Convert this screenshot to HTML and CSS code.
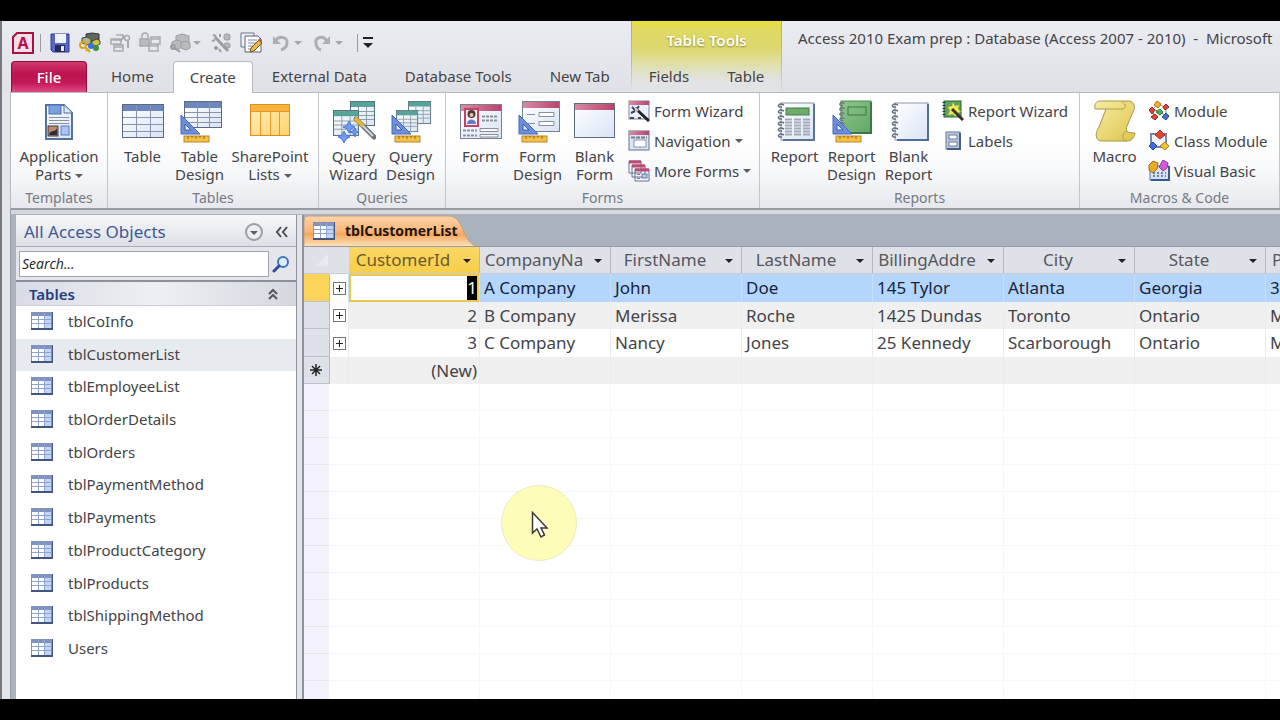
FILE: index.html
```html
<!DOCTYPE html>
<html lang="en">
<head>
    <meta charset="UTF-8">
    <meta name="viewport" content="width=device-width, initial-scale=1.0">
    <title>Access 2010 Exam prep</title>
    <link rel="stylesheet" href="styles.css">
</head>
<body>
    <!-- Shared icon parts -->
    <svg class="defs" width="0" height="0" aria-hidden="true">
        <defs>
            <linearGradient id="gPage" x1="0" y1="0" x2="1" y2="1">
                <stop offset="0" stop-color="#ffffff"/>
                <stop offset="1" stop-color="#d9e4f7"/>
            </linearGradient>
            <linearGradient id="gPink" x1="0" y1="0" x2="1" y2="0">
                <stop offset="0" stop-color="#d88aa4"/>
                <stop offset="1" stop-color="#b8456c"/>
            </linearGradient>
            <linearGradient id="gGreen" x1="0" y1="0" x2="1" y2="1">
                <stop offset="0" stop-color="#8fc48c"/>
                <stop offset="1" stop-color="#5fa865"/>
            </linearGradient>
            <linearGradient id="gScroll" x1="0" y1="0" x2="1" y2="1">
                <stop offset="0" stop-color="#f6eda4"/>
                <stop offset="1" stop-color="#dfc54c"/>
            </linearGradient>
            <linearGradient id="gOrange" x1="0" y1="0" x2="1" y2="1">
                <stop offset="0" stop-color="#fff0b8"/>
                <stop offset="1" stop-color="#fdd272"/>
            </linearGradient>
        </defs>
        <symbol id="designTools" viewBox="0 0 44 44">
            <path d="M3 15V34H22Z" fill="#6c8fdc" stroke="#4468b8"/>
            <path d="M7 24V30H13Z" fill="#e4ecfb" stroke="#3a5cab"/>
            <rect x="6" y="36" width="25" height="6" fill="#f5c044" stroke="#b8862a"/>
            <path d="M10 36v3M14 36v2M18 36v3M22 36v2M26 36v3" stroke="#8a6420"/>
        </symbol>
        <symbol id="tableSmall" viewBox="0 0 22 18">
            <rect x="0" y="0" width="22" height="18" fill="#42567f"/>
            <rect x="0" y="0" width="21" height="16" fill="#8093bf"/>
            <rect x="1" y="4" width="19" height="12" fill="#ffffff"/>
            <path d="M14 4h6v12h-6z" fill="#c3d5f6"/>
            <path d="M1 7.5h19M1 11.5h19M7.5 1v15M13.5 1v15" stroke="#8fa5d0"/>
        </symbol>
        <symbol id="queryTable" viewBox="0 0 26 26">
            <rect x="0.5" y="0.5" width="24" height="24" fill="url(#gPage)" stroke="#57717c"/>
            <rect x="1" y="1" width="23" height="5" fill="#55a39b"/>
            <path d="M1 10.5h23M1 14.5h23M1 18.5h23M8.5 6v18M16.5 6v18" stroke="#8da0a8"/>
        </symbol>
        <symbol id="binding" viewBox="0 0 10 38">
            <path d="M8 3c-6-3-8 3-2 2M8 9c-6-3-8 3-2 2M8 15c-6-3-8 3-2 2M8 21c-6-3-8 3-2 2M8 27c-6-3-8 3-2 2M8 33c-6-3-8 3-2 2" fill="none" stroke="#666c78" stroke-width="1.4"/>
        </symbol>
        <symbol id="cubes" viewBox="0 0 22 18">
            <path d="M7 2l6-2 7 2v6l-6 3-7-2z"/>
            <path d="M3 8l5-2 5 2v5l-5 3-5-2z"/>
            <path d="M12 9l5-2 4 2v5l-4 2-5-2z"/>
        </symbol>
    </svg>

    <div class="window">
        <header class="title-bar">
            <div class="title-left">
                <div class="quick-access">
                    <svg class="app-logo" viewBox="0 0 22 22" width="22" height="22">
                        <path d="M1 5L5 1H21V21H1Z" fill="#f8dde8" stroke="#a5123f" stroke-width="2"/>
                        <text x="11" y="17" text-anchor="middle">A</text>
                    </svg>
                    <span class="qa-sep"></span>
                    <button class="qa-btn" aria-label="Save">
                        <svg viewBox="0 0 22 22" width="22" height="22">
                            <path d="M2 2H20V20H4L2 18Z" fill="#5a65c4" stroke="#343c8e"/>
                            <rect x="6" y="2" width="11" height="9" fill="#eef2fd"/>
                            <rect x="6" y="13" width="10" height="7" fill="#242b60"/>
                            <rect x="12" y="14" width="3" height="5" fill="#e6eafc"/>
                        </svg>
                    </button>
                    <button class="qa-btn" aria-label="Database permissions">
                        <svg viewBox="0 0 22 22" width="22" height="22">
                            <path d="M7 2l6-1 7 1v6l-6 2-7-1z" fill="#5f6b5c" stroke="#333"/>
                            <path d="M3 6l5-1 4 2v4l-4 2-5-2z" fill="#a9b78a" stroke="#444"/>
                            <path d="M13 9l5-2 3 2v3l-4 2-4-1z" fill="#d3c23e" stroke="#444"/>
                            <circle cx="12" cy="14" r="3" fill="#3f6ee0"/>
                            <circle cx="17" cy="16" r="3" fill="#38943c"/>
                            <circle cx="4" cy="13" r="3" fill="none" stroke="#d9a41e" stroke-width="2"/>
                            <path d="M6 15l5 5M9 17l-2 2" stroke="#d9a41e" stroke-width="2"/>
                        </svg>
                    </button>
                    <button class="qa-btn" aria-label="Form key" disabled>
                        <svg viewBox="0 0 22 22" width="22" height="22" fill="none" stroke="#a9abae" stroke-width="1.500">
                            <path d="M2 7h10v5H2zM2 8h10M5 13h9v6H5zM5 15h9M7 3h7v3"/>
                            <circle cx="18" cy="6" r="2.500"/>
                            <path d="M19 9v7M16 4l-5 5" stroke-width="2"/>
                        </svg>
                    </button>
                    <button class="qa-btn" aria-label="Lock form" disabled>
                        <svg viewBox="0 0 22 22" width="22" height="22" fill="none" stroke="#a9abae" stroke-width="1.500">
                            <path d="M3 7V4a3 3 0 0 1 6 0V7"/>
                            <rect x="1" y="7" width="9" height="7" fill="#b9bbbe"/>
                            <path d="M12 5h9v7h-9zM12 7h9M10 12h9v7h-9zM10 14h9"/>
                        </svg>
                    </button>
                    <button class="qa-btn qa-split" aria-label="Users" disabled>
                        <svg viewBox="0 0 22 22" width="22" height="22" fill="#b9bbbe" stroke="#9b9da0">
                            <use href="#cubes"/>
                            <circle cx="4" cy="15" r="2" fill="none" stroke-width="2"/>
                            <path d="M6 16l5 4" stroke-width="2"/>
                        </svg>
                        <span class="caret caret-off"></span>
                    </button>
                    <button class="qa-btn" aria-label="Wizard" disabled>
                        <svg viewBox="0 0 22 22" width="22" height="22" fill="#b4b6b9" stroke="#9b9da0">
                            <rect x="14" y="2" width="6" height="6" rx="2"/>
                            <rect x="14" y="11" width="6" height="5" rx="2"/>
                            <path d="M5 5L18 19" stroke-width="3"/>
                            <path d="M3 3l3 1M10 2v3M2 9l3-1M4 16h4M6 14v4M9 17l2 3" stroke-width="2"/>
                        </svg>
                    </button>
                    <button class="qa-btn" aria-label="Edit form">
                        <svg viewBox="0 0 22 22" width="22" height="22">
                            <path d="M1 1h13v14H1z" fill="#eef1f7" stroke="#6b7488"/>
                            <path d="M5 4h13l3 3v13H5z" fill="#fafbfe" stroke="#59647d"/>
                            <path d="M8 8h9M8 11h9M8 14h7M8 17h5" stroke="#7d89a5"/>
                            <path d="M10 20l1-4 8-8 3 3-8 8z" fill="#e8b84a" stroke="#77531d"/>
                            <path d="M18 8l2-2 2 3-1 2z" fill="#b85c3a"/>
                        </svg>
                    </button>
                    <button class="qa-btn qa-split" aria-label="Undo" disabled>
                        <svg viewBox="0 0 22 22" width="22" height="22">
                            <path d="M5 9c4-6 13-4 12 2 0 4-3 6-6 7" fill="none" stroke="#adafb2" stroke-width="3"/>
                            <path d="M3 4v8h8z" fill="#adafb2"/>
                        </svg>
                        <span class="caret caret-off"></span>
                    </button>
                    <button class="qa-btn qa-split" aria-label="Redo" disabled>
                        <svg viewBox="0 0 22 22" width="22" height="22">
                            <path d="M16 9C12 3 4 5 5 11c0 4 2 6 5 7" fill="none" stroke="#adafb2" stroke-width="3"/>
                            <path d="M19 4v8h-8z" fill="#adafb2"/>
                        </svg>
                        <span class="caret caret-off"></span>
                    </button>
                    <span class="qa-sep qa-sep-last"></span>
                    <button class="qa-more" aria-label="Customize Quick Access Toolbar"><span class="caret caret-dark"></span></button>
                </div>
                <nav class="tabs">
                    <button class="tab tab-file">File</button>
                    <button class="tab">Home</button>
                    <button class="tab tab-active">Create</button>
                    <button class="tab">External Data</button>
                    <button class="tab">Database Tools</button>
                    <button class="tab">New Tab</button>
                </nav>
            </div>
            <div class="context">
                <div class="context-name">Table Tools</div>
                <nav class="tabs">
                    <button class="tab">Fields</button>
                    <button class="tab">Table</button>
                </nav>
            </div>
            <div class="window-title">Access 2010 Exam prep : Database (Access 2007 - 2010) &nbsp;-&nbsp; Microsoft</div>
        </header>

        <div class="ribbon">
            <section class="group">
                <div class="group-items">
                    <button class="big big-wide">
                        <svg viewBox="0 0 44 44" width="44" height="44">
                            <path d="M9 5H27L35 13V39H9Z" fill="url(#gPage)" stroke="#55719c" stroke-width="2"/>
                            <path d="M27 5V13H35" fill="#dfe8f6" stroke="#55719c"/>
                            <rect x="12" y="5" width="12" height="9" fill="#7ba0e2" stroke="#4a70b8"/>
                            <path d="M12 17.500H32M12 20.500H32M12 23.500H32" stroke="#8a919e"/>
                            <rect x="11" y="26" width="10" height="10" fill="#c08a6c" stroke="#3d3a44"/>
                            <path d="M12 35c1-6 7-2 8-7v7z" fill="#2e2c38"/>
                            <rect x="24" y="26" width="8" height="9" fill="#a9c5f2" stroke="#557cc4"/>
                        </svg>
                        <span>Application<br>Parts <i class="caret"></i></span>
                    </button>
                </div>
                <h2>Templates</h2>
            </section>

            <section class="group">
                <div class="group-items">
                    <button class="big">
                        <svg viewBox="0 0 44 44" width="44" height="44">
                            <rect x="1.500" y="4.500" width="41" height="33" fill="url(#gPage)" stroke="#5c6984"/>
                            <rect x="2" y="5" width="40" height="6" fill="#6d87bd"/>
                            <path d="M2 17.500H42M2 24.500H42M2 31.500H42M15.500 5V37M29.500 5V37" stroke="#8995ad"/>
                        </svg>
                        <span>Table</span>
                    </button>
                    <button class="big">
                        <svg viewBox="0 0 44 44" width="44" height="44">
                            <rect x="6.500" y="1.500" width="37" height="26" fill="url(#gPage)" stroke="#5c6984"/>
                            <rect x="7" y="2" width="36" height="6" fill="#6d87bd"/>
                            <path d="M7 12.500H43M7 17.500H43M7 22.500H43M19.500 2V27M31.500 2V27" stroke="#8995ad"/>
                            <use href="#designTools"/>
                        </svg>
                        <span>Table<br>Design</span>
                    </button>
                    <button class="big big-wide">
                        <svg viewBox="0 0 44 44" width="44" height="44">
                            <rect x="2.500" y="4.500" width="39" height="31" fill="url(#gOrange)" stroke="#e08d1c"/>
                            <rect x="3" y="5" width="38" height="6" fill="#f8b23e"/>
                            <path d="M3 11.500H41M12.500 11V35M22.500 11V35M31.500 11V35" stroke="#e79a2c"/>
                        </svg>
                        <span>SharePoint<br>Lists <i class="caret"></i></span>
                    </button>
                </div>
                <h2>Tables</h2>
            </section>

            <section class="group">
                <div class="group-items">
                    <button class="big">
                        <svg viewBox="0 0 44 44" width="44" height="44">
                            <use href="#queryTable" x="18" y="1" width="26" height="26"/>
                            <use href="#queryTable" x="1" y="10" width="27" height="27"/>
                            <path d="M24 19L42 37" stroke="#6e737d" stroke-width="5" stroke-linecap="round"/>
                            <path d="M25 20L41 36" stroke="#d5d8dd" stroke-width="2"/>
                            <path d="M23 18L31 26" stroke="#e0b63a" stroke-width="4"/>
                            <path d="M17 21l2 4 4 2-4 2-2 4-2-4-4-2 4-2zM12 31l2 4 4 2-4 2-2 4-2-4-4-2 4-2zM23 28l1 3 3 1-3 1-1 4-2-4-3-1 3-1z" fill="#6f9af0" stroke="#4d78d8"/>
                        </svg>
                        <span>Query<br>Wizard</span>
                    </button>
                    <button class="big">
                        <svg viewBox="0 0 44 44" width="44" height="44">
                            <use href="#queryTable" x="19" y="1" width="24" height="24"/>
                            <use href="#queryTable" x="7" y="10" width="23" height="23"/>
                            <use href="#designTools"/>
                        </svg>
                        <span>Query<br>Design</span>
                    </button>
                </div>
                <h2>Queries</h2>
            </section>

            <section class="group">
                <div class="group-items">
                    <button class="big">
                        <svg viewBox="0 0 44 44" width="44" height="44">
                            <rect x="1.500" y="4.500" width="41" height="34" fill="url(#gPage)" stroke="#77808f"/>
                            <rect x="2" y="5" width="40" height="6" fill="url(#gPink)"/>
                            <rect x="6" y="9" width="13" height="17" fill="#f9eef2" stroke="#c5416c" stroke-width="2"/>
                            <circle cx="12.500" cy="14" r="4" fill="#4a3c36"/>
                            <circle cx="12.500" cy="15" r="2" fill="#e8c0a4"/>
                            <path d="M8 24c0-6 9-6 9 0z" fill="#5e7fd0"/>
                            <path d="M23 16.500H39M23 20.500H39M4 30.500H18M4 35.500H18" stroke="#8b909b" stroke-width="2" stroke-dasharray="3 1"/>
                            <path d="M21 28.500H39V31.500H21ZM21 34.500H39V37H21Z" fill="#f6f7fa" stroke="#8a909c"/>
                        </svg>
                        <span>Form</span>
                    </button>
                    <button class="big">
                        <svg viewBox="0 0 44 44" width="44" height="44">
                            <rect x="6.500" y="1.500" width="37" height="30" fill="url(#gPage)" stroke="#77808f"/>
                            <rect x="7" y="2" width="36" height="6" fill="url(#gPink)"/>
                            <path d="M11 14.500H19M11 23.500H19" stroke="#8a909c"/>
                            <path d="M23 12.500H38V16.500H23ZM23 21.500H38V25.500H23Z" fill="#fff" stroke="#8a909c"/>
                            <use href="#designTools"/>
                        </svg>
                        <span>Form<br>Design</span>
                    </button>
                    <button class="big">
                        <svg viewBox="0 0 44 44" width="44" height="44">
                            <rect x="1.500" y="3.500" width="40" height="34" fill="url(#gPage)" stroke="#5e6a80"/>
                            <rect x="2" y="4" width="39" height="6" fill="url(#gPink)"/>
                        </svg>
                        <span>Blank<br>Form</span>
                    </button>
                    <div class="smalls">
                        <button class="small">
                            <svg viewBox="0 0 22 22" width="22" height="22">
                                <rect x="1" y="1" width="20" height="18" fill="#eaf0fb" stroke="#7f8794"/>
                                <rect x="1" y="1" width="20" height="4" fill="url(#gPink)"/>
                                <path d="M7 8L21 21" stroke="#26242a" stroke-width="3"/>
                                <path d="M4 7l3 3M11 6l-2 3M3 13l4-2M2 18h4M10 18h3" stroke="#39456e" stroke-width="2"/>
                                <path d="M7 8l3 3" stroke="#e4d9b6" stroke-width="2"/>
                            </svg>
                            Form Wizard
                        </button>
                        <button class="small">
                            <svg viewBox="0 0 22 22" width="22" height="22">
                                <rect x="1" y="1" width="20" height="19" fill="#dce5f4" stroke="#66718a"/>
                                <rect x="1" y="1" width="20" height="4" fill="url(#gPink)"/>
                                <path d="M3 7.500H19" stroke="#6f7a93" stroke-width="2" stroke-dasharray="4 1"/>
                                <rect x="6" y="10" width="12" height="7" fill="#fff" stroke="#8a93a8"/>
                            </svg>
                            Navigation <i class="caret"></i>
                        </button>
                        <button class="small">
                            <svg viewBox="0 0 22 22" width="22" height="22">
                                <path d="M1 1H13V13H1ZM4 5H17V17H4ZM7 9H21V21H7Z" fill="#f5f7fc" stroke="#66718a"/>
                                <path d="M1 2H13M4 6H17M7 10H21" stroke="#c04a74" stroke-width="3"/>
                                <path d="M9 14.500H12M9 18.500H12" stroke="#6f7a93"/>
                                <rect x="14" y="14" width="5" height="4" fill="#b8cbed" stroke="#5f78ab"/>
                            </svg>
                            More Forms <i class="caret"></i>
                        </button>
                    </div>
                </div>
                <h2>Forms</h2>
            </section>

            <section class="group">
                <div class="group-items">
                    <button class="big">
                        <svg viewBox="0 0 44 44" width="44" height="44">
                            <rect x="8" y="3" width="33" height="37" fill="url(#gPage)" stroke="#8a93a5"/>
                            <path d="M41 4V40H10" fill="none" stroke="#5d7297" stroke-width="2"/>
                            <rect x="13" y="8" width="23" height="7" fill="#6cab68" stroke="#447f47"/>
                            <path d="M12 19.500H37M12 22.500H37M12 25.500H37M12 28.500H37M12 31.500H37M12 34.500H37" stroke="#a3aab8" stroke-width="2" stroke-dasharray="7 2"/>
                            <use href="#binding" x="3" y="2" width="10" height="38"/>
                        </svg>
                        <span>Report</span>
                    </button>
                    <button class="big">
                        <svg viewBox="0 0 44 44" width="44" height="44">
                            <rect x="11" y="1" width="30" height="32" fill="url(#gGreen)" stroke="#4d8d56"/>
                            <path d="M41 2V33H12" fill="none" stroke="#3c774a" stroke-width="2"/>
                            <rect x="18" y="7" width="18" height="8" fill="none" stroke="#3a7a43"/>
                            <use href="#binding" x="7" y="1" width="10" height="32"/>
                            <use href="#designTools"/>
                        </svg>
                        <span>Report<br>Design</span>
                    </button>
                    <button class="big">
                        <svg viewBox="0 0 44 44" width="44" height="44">
                            <rect x="8" y="3" width="33" height="37" fill="url(#gPage)" stroke="#8a99b5"/>
                            <path d="M41 4V40H10" fill="none" stroke="#4f6c9e" stroke-width="2"/>
                            <use href="#binding" x="3" y="2" width="10" height="38"/>
                        </svg>
                        <span>Blank<br>Report</span>
                    </button>
                    <div class="smalls smalls-reports">
                        <button class="small">
                            <svg viewBox="0 0 22 22" width="22" height="22">
                                <rect x="2" y="1" width="17" height="16" fill="#5fa35c" stroke="#2c6335"/>
                                <path d="M2 2V17" stroke="#333" stroke-width="3" stroke-dasharray="1 2"/>
                                <path d="M11 2l2 4 4-1-1 4 3 3-4 1-1 4-3-3-5 1 2-4-2-4 4-1z" fill="#f4e64c"/>
                                <path d="M10 9L21 20" stroke="#3a3324" stroke-width="3"/>
                            </svg>
                            Report Wizard
                        </button>
                        <button class="small">
                            <svg viewBox="0 0 22 22" width="22" height="22">
                                <rect x="4" y="2" width="14" height="17" fill="#b8c8de" stroke="#66799a"/>
                                <path d="M18 3V19H5" fill="none" stroke="#4c5f80" stroke-width="2"/>
                                <rect x="7" y="5" width="8" height="4" fill="#fff" stroke="#6b7d9c"/>
                                <rect x="7" y="12" width="8" height="4" fill="#fff" stroke="#6b7d9c"/>
                            </svg>
                            Labels
                        </button>
                    </div>
                </div>
                <h2>Reports</h2>
            </section>

            <section class="group">
                <div class="group-items">
                    <button class="big">
                        <svg viewBox="0 0 44 44" width="44" height="44">
                            <path d="M7 1H36C42 2 43 8 39 14L34 26C32 31 34 33 42 33C41 38 39 41 34 41H8C2 40 2 33 6 27L13 9H2C1 5 3 1 7 1Z" fill="url(#gScroll)" stroke="#a8964a"/>
                            <path d="M13 9H29C33 9 34 4 29 2M34 41C29 41 28 33 34 31" fill="none" stroke="#b5a04a"/>
                        </svg>
                        <span>Macro</span>
                    </button>
                    <div class="smalls smalls-macros">
                        <button class="small">
                            <svg viewBox="0 0 22 22" width="22" height="22">
                                <path d="M10 4L4 10L7 18M10 4L18 8L18 16M11 11L4 10M11 11L18 16" fill="none" stroke="#8a8f99"/>
                                <path d="M9 1l4 3-3 4-4-3z" fill="#f0b429" stroke="#a8731b"/>
                                <path d="M4 7l3 3-3 4-3-4z" fill="#e2452f" stroke="#8f2a1c"/>
                                <path d="M18 4l3 3-4 3-2-3z" fill="#e2452f" stroke="#8f2a1c"/>
                                <path d="M12 9l3 3-3 3-4-3z" fill="#4caf50" stroke="#2d7a35"/>
                                <path d="M7 14l3 3-3 3-4-3z" fill="#e2452f" stroke="#8f2a1c"/>
                                <path d="M18 13l3 3-3 4-4-3z" fill="#4470d8" stroke="#274795"/>
                            </svg>
                            Module
                        </button>
                        <button class="small">
                            <svg viewBox="0 0 22 22" width="22" height="22">
                                <path d="M3 4H18V17H3Z" fill="#f4f7fe" stroke="#7b86a8" stroke-width="2"/>
                                <path d="M12 0l5 5-5 4-5-4z" fill="#e2452f" stroke="#a33121"/>
                                <path d="M5 12l4 4-4 4-4-4z" fill="#3f6ee0" stroke="#274795"/>
                                <path d="M17 12l4 4-4 4-5-4z" fill="#f0c02e" stroke="#a8811b"/>
                            </svg>
                            Class Module
                        </button>
                        <button class="small">
                            <svg viewBox="0 0 22 22" width="22" height="22">
                                <rect x="2" y="6" width="19" height="14" fill="#d7e2f6" stroke="#5d77ad"/>
                                <path d="M21 6V20H3" fill="none" stroke="#3f598e" stroke-width="2"/>
                                <path d="M5 13h13M5 16h13" stroke="#6f84b4" stroke-width="2" stroke-dasharray="2 2"/>
                                <path d="M5 1l5 2-1 6-4 4-4-3V5z" fill="#e6ac26" stroke="#96701a"/>
                                <path d="M15 0l5 3-1 5-4 3-4-4z" fill="#d35bd8" stroke="#8f3796"/>
                            </svg>
                            Visual Basic
                        </button>
                    </div>
                </div>
                <h2>Macros &amp; Code</h2>
            </section>
        </div>

        <main class="workspace">
            <aside class="nav-pane">
                <div class="nav-header">
                    <h1>All Access Objects</h1>
                    <button class="nav-menu" aria-label="Filter objects"><span class="caret"></span></button>
                    <button class="nav-collapse" aria-label="Collapse pane">
                        <svg viewBox="0 0 14 12" width="14" height="12" fill="none" stroke="#4a4d55" stroke-width="2">
                            <path d="M6 1L2 6L6 11M12 1L8 6L12 11"/>
                        </svg>
                    </button>
                </div>
                <div class="nav-search">
                    <input type="text" placeholder="Search..." aria-label="Search">
                    <button aria-label="Search objects">
                        <svg viewBox="0 0 18 18" width="18" height="18">
                            <circle cx="11" cy="7" r="5" fill="#d9efff" stroke="#3d74bd" stroke-width="2"/>
                            <path d="M7 11L2 16" stroke="#2b4d94" stroke-width="3" stroke-linecap="round"/>
                        </svg>
                    </button>
                </div>
                <button class="nav-group">
                    Tables
                    <svg viewBox="0 0 10 12" width="10" height="12" fill="none" stroke="#55585f" stroke-width="2">
                        <path d="M1 6L5 2L9 6M1 11L5 7L9 11"/>
                    </svg>
                </button>
                <ul class="nav-list">
                    <li><button><svg width="22" height="18"><use href="#tableSmall"/></svg>tblCoInfo</button></li>
                    <li><button class="selected"><svg width="22" height="18"><use href="#tableSmall"/></svg>tblCustomerList</button></li>
                    <li><button><svg width="22" height="18"><use href="#tableSmall"/></svg>tblEmployeeList</button></li>
                    <li><button><svg width="22" height="18"><use href="#tableSmall"/></svg>tblOrderDetails</button></li>
                    <li><button><svg width="22" height="18"><use href="#tableSmall"/></svg>tblOrders</button></li>
                    <li><button><svg width="22" height="18"><use href="#tableSmall"/></svg>tblPaymentMethod</button></li>
                    <li><button><svg width="22" height="18"><use href="#tableSmall"/></svg>tblPayments</button></li>
                    <li><button><svg width="22" height="18"><use href="#tableSmall"/></svg>tblProductCategory</button></li>
                    <li><button><svg width="22" height="18"><use href="#tableSmall"/></svg>tblProducts</button></li>
                    <li><button><svg width="22" height="18"><use href="#tableSmall"/></svg>tblShippingMethod</button></li>
                    <li><button><svg width="22" height="18"><use href="#tableSmall"/></svg>Users</button></li>
                </ul>
            </aside>
            <div class="splitter"></div>

            <section class="document">
                <div class="doc-tabs">
                    <button class="doc-tab">
                        <svg class="doc-tab-shape" viewBox="0 0 172 31" width="172" height="31">
                            <defs>
                                <linearGradient id="gTab" x1="0" y1="0" x2="0" y2="1">
                                    <stop offset="0" stop-color="#fbd3a6"/>
                                    <stop offset="0.5" stop-color="#f9b87c"/>
                                    <stop offset="0.6" stop-color="#f6a55c"/>
                                    <stop offset="1" stop-color="#fde0b8"/>
                                </linearGradient>
                            </defs>
                            <path d="M0 31V5Q0 1 4 1H145C160 1 158 27 172 31Z" fill="url(#gTab)"/>
                            <path d="M0 31V5Q0 1 4 1H145C160 1 158 27 172 31" fill="none" stroke="#c2a184"/>
                        </svg>
                        <svg class="doc-tab-icon" width="22" height="18"><use href="#tableSmall"/></svg>
                        <span>tblCustomerList</span>
                    </button>
                </div>
                <table class="datasheet">
                    <colgroup>
                        <col class="col-selector">
                        <col class="col-expand">
                        <col span="8">
                    </colgroup>
                    <thead>
                        <tr>
                            <th class="select-all"><svg viewBox="0 0 12 12" width="12" height="12"><path d="M12 0V12H0Z" fill="#e9ebf0"/></svg></th>
                            <th class="no-line"></th>
                            <th class="current"><div><span>CustomerId</span><button aria-label="Filter CustomerId"><i class="caret caret-dark"></i></button></div></th>
                            <th><div><span>CompanyNa</span><button aria-label="Filter CompanyNa"><i class="caret caret-dark"></i></button></div></th>
                            <th><div><span>FirstName</span><button aria-label="Filter FirstName"><i class="caret caret-dark"></i></button></div></th>
                            <th><div><span>LastName</span><button aria-label="Filter LastName"><i class="caret caret-dark"></i></button></div></th>
                            <th><div><span>BillingAddre</span><button aria-label="Filter BillingAddre"><i class="caret caret-dark"></i></button></div></th>
                            <th><div><span>City</span><button aria-label="Filter City"><i class="caret caret-dark"></i></button></div></th>
                            <th><div><span>State</span><button aria-label="Filter State"><i class="caret caret-dark"></i></button></div></th>
                            <th class="clipped">P</th>
                        </tr>
                    </thead>
                    <tbody>
                        <tr class="active">
                            <td class="selector"></td>
                            <td class="expand"><button aria-label="Expand record 1"></button></td>
                            <td class="number editing"><mark>1</mark></td>
                            <td>A Company</td><td>John</td><td>Doe</td><td>145 Tylor</td><td>Atlanta</td><td>Georgia</td><td>3</td>
                        </tr>
                        <tr>
                            <td class="selector"></td>
                            <td class="expand"><button aria-label="Expand record 2"></button></td>
                            <td class="number">2</td>
                            <td>B Company</td><td>Merissa</td><td>Roche</td><td>1425 Dundas</td><td>Toronto</td><td>Ontario</td><td>M</td>
                        </tr>
                        <tr>
                            <td class="selector"></td>
                            <td class="expand"><button aria-label="Expand record 3"></button></td>
                            <td class="number">3</td>
                            <td>C Company</td><td>Nancy</td><td>Jones</td><td>25 Kennedy</td><td>Scarborough</td><td>Ontario</td><td>M</td>
                        </tr>
                        <tr>
                            <td class="selector">
                                <svg viewBox="0 0 12 12" width="12" height="12" stroke="#222" stroke-width="1.500"><path d="M6 0V12M0 6H12M2 2L10 10M10 2L2 10"/></svg>
                            </td>
                            <td></td>
                            <td class="number">(New)</td>
                            <td></td><td></td><td></td><td></td><td></td><td></td><td></td>
                        </tr>
                    </tbody>
                </table>
                <div class="sheet-empty"></div>
            </section>
        </main>

        <div class="pointer">
            <svg viewBox="0 0 18 28" width="18" height="28">
                <path d="M1.500 1.500V22L6 18L10 26L13.500 24L10 17H16Z" fill="#fff" stroke="#3c3c3c" stroke-width="1.500"/>
            </svg>
        </div>
    </div>
</body>
</html>
```
FILE: styles.css
```css
* {
    box-sizing: border-box;
}

body {
    margin: 0;
    height: 100vh;
    padding: 21px 0;
    background: #000;
    font-family: "Noto Sans", "Open Sans", sans-serif;
    font-size: 15px;
    line-height: 18px;
    color: #444448;
    overflow: hidden;
}

button {
    margin: 0;
    padding: 0;
    border: 0;
    background: none;
    font: inherit;
    color: inherit;
    white-space: nowrap;
}

svg {
    display: block;
    flex-shrink: 0;
}

h1,
h2 {
    margin: 0;
    font-weight: normal;
}

.defs {
    position: absolute;
}

.caret {
    display: inline-block;
    border: 4px solid transparent;
    border-top: 4px solid #5a5c60;
    border-bottom: 0;
    vertical-align: middle;
}

.caret-off {
    border-top-color: #a4a6a9;
}

.caret-dark {
    border-top-color: #222;
}

.window {
    position: relative;
    display: flex;
    flex-direction: column;
    height: 100%;
    border-left: 2px solid #77797f;
    padding-left: 8px;
    background: #e3e5ea;
    overflow: hidden;
}

/* Title bar, quick access toolbar and tabs */
.title-bar {
    display: flex;
    height: 71px;
    margin-left: -8px;
    padding-left: 9px;
    background: linear-gradient(#ebecf1, #dfe1e6);
}

.title-left {
    display: flex;
    flex-direction: column;
    width: 620px;
    flex-shrink: 0;
}

.quick-access {
    display: flex;
    align-items: center;
    height: 40px;
    padding: 3px 0 0 1px;
}

.app-logo text {
    fill: #b0134b;
    font-size: 16px;
    font-weight: 700;
}

.qa-sep {
    width: 1px;
    height: 18px;
    margin: 0 5px 0 6px;
    background: #9b9da3;
}

.qa-sep-last {
    margin: 0 5px 0 8px;
}

.qa-btn {
    display: flex;
    align-items: center;
    width: 30px;
    height: 24px;
    padding-left: 3px;
}

.qa-split {
    width: 41px;
    gap: 2px;
}

.qa-more {
    padding-top: 2px;
    border-top: 2px solid #222;
    line-height: 4px;
}

.qa-more .caret {
    border-width: 5px;
    border-bottom-width: 0;
}

.tabs {
    display: flex;
    height: 31px;
}

.tab {
    flex-shrink: 0;
    height: 31px;
    padding: 0 19px 2px;
}

.tab-file {
    width: 76px;
    margin-right: 5px;
    padding: 0;
    border: 1px solid #8d0f3c;
    border-bottom: 0;
    border-radius: 4px 4px 0 0;
    background: linear-gradient(#cf3a6e, #bd1350 40%, #c21a58 70%, #df4a86);
    color: #fff;
    font-weight: 500;
}

.tab-active {
    position: relative;
    height: 32px;
    padding: 0 16px 2px;
    border: 1px solid #b6b9bf;
    border-bottom: 0;
    border-radius: 4px 4px 0 0;
    background: #fff;
}

.context {
    width: 151px;
    flex-shrink: 0;
    border: 1px solid;
    border-width: 0 1px;
    border-image: linear-gradient(#b9b440, #c4c17a 60%, #dfe1e6) 1;
    background: linear-gradient(#efdf30, #e0da60 6px, #dcd86f 28px, #e0dfa6 42px, #e1e3e4 60px);
}

.context-name {
    height: 40px;
    line-height: 38px;
    text-align: center;
    color: #fffef0;
    font-weight: 600;
    text-shadow: 0 1px 2px #8a8640;
}

.context .tabs {
    justify-content: center;
}

.context .tab + .tab {
    padding-right: 0;
}

.context .tab:first-child {
    padding-left: 0;
}

.window-title {
    flex: 1;
    padding: 8px 0 0 16px;
    white-space: nowrap;
}

/* Ribbon */
.ribbon {
    display: flex;
    flex-shrink: 0;
    height: 118px;
    border: 1px solid #b6b9bf;
    border-right: 0;
    border-bottom: 2px solid #979ba2;
    background: linear-gradient(#fff 40%, #f7f8fa 70%, #e6e8ed);
}

.group {
    display: flex;
    flex-direction: column;
    flex-shrink: 0;
    padding: 3px 6px 0;
    border-right: 1px solid #c3c6cc;
}

.group-items {
    display: flex;
    height: 93px;
}

.group h2 {
    text-align: center;
    font-size: 14px;
    line-height: 18px;
    color: #777a84;
}

.big {
    display: flex;
    flex-direction: column;
    align-items: center;
    gap: 3px;
    width: 57px;
    padding-top: 4px;
}

.big-wide {
    width: 84px;
}

.smalls {
    width: 130px;
    padding-left: 5px;
}

.smalls-reports {
    width: 136px;
}

.small {
    display: flex;
    align-items: center;
    gap: 4px;
    height: 30px;
    padding-bottom: 1px;
}

/* Navigation pane */
.workspace {
    display: flex;
    flex: 1;
    min-height: 0;
    padding-top: 5px;
    border-left: 1px solid #9a9ea8;
    background: linear-gradient(#d5d9df 4px, #a9b2bd 4px);
}

.nav-pane {
    display: flex;
    flex-direction: column;
    width: 280px;
    margin-left: 5px;
    flex-shrink: 0;
    background: #fff;
}

.nav-header {
    display: flex;
    align-items: center;
    height: 32px;
    padding: 2px 7px 0 8px;
    border-bottom: 1px solid #a9adb6;
    background: linear-gradient(#f7f8fa, #dddfe6);
}

.nav-header h1 {
    flex: 1;
    font-size: 17px;
    line-height: 20px;
    color: #3f5a96;
}

.nav-menu {
    width: 18px;
    height: 18px;
    margin-right: 12px;
    border: 2px solid #9b9ea6;
    border-radius: 50%;
    background: #eceef2;
    line-height: 8px;
}

.nav-search {
    display: flex;
    align-items: center;
    height: 35px;
    padding: 0 6px 0 3px;
    gap: 3px;
    border-bottom: 2px solid #8b909b;
    background: #e4e6ec;
}

.nav-search input {
    flex: 1;
    min-width: 0;
    height: 26px;
    padding: 0 2px;
    border: 1px solid #a0a4ad;
    background: #fff;
    font: italic 14px "Open Sans", sans-serif;
}

.nav-search input::placeholder {
    color: #222;
}

.nav-group {
    display: flex;
    align-items: center;
    justify-content: space-between;
    height: 24px;
    padding: 0 18px 0 13px;
    border-bottom: 1px solid #ccd0d8;
    background: linear-gradient(90deg, #d9dce5, #edeff3 50%, #d5d8e0);
    color: #1f4080;
    font-weight: 600;
}

.nav-list {
    display: grid;
    grid-auto-rows: 1fr;
    height: 360px;
    margin: 0;
    padding: 0;
    list-style: none;
}

.nav-list button {
    display: flex;
    align-items: center;
    gap: 15px;
    width: 100%;
    height: 100%;
    padding: 0 0 3px 15px;
}

.nav-list .selected {
    background: #e7eaee;
}

.splitter {
    width: 8px;
    flex-shrink: 0;
    border: 2px solid #8e929c;
    border-width: 0 2px 0 1px;
    background: #e3e5ea;
}

/* Datasheet */
.document {
    display: flex;
    flex-direction: column;
    flex: 1;
    min-width: 0;
    overflow: hidden;
    background: #fff;
}

.doc-tabs {
    height: 32px;
    flex-shrink: 0;
    border-bottom: 1px solid #969ca6;
    background: #a9b2bd;
}

.doc-tab {
    position: relative;
    display: flex;
    align-items: center;
    gap: 10px;
    height: 31px;
    padding-left: 9px;
    color: #1d1612;
    font-family: "Open Sans", sans-serif;
    font-size: 14px;
    font-weight: 700;
}

.doc-tab-shape {
    position: absolute;
    left: 0;
    top: 0;
}

.doc-tab-icon,
.doc-tab span {
    position: relative;
}

.datasheet {
    width: 1093px;
    flex-shrink: 0;
    table-layout: fixed;
    border-collapse: separate;
    border-spacing: 0;
    font-size: 17px;
    line-height: 20px;
}

.datasheet col {
    width: 131px;
}

.datasheet .col-selector {
    width: 26px;
}

.datasheet .col-expand {
    width: 19px;
}

.datasheet th {
    height: 27px;
    padding: 0;
    border-right: 1px solid #b5b8c0;
    border-bottom: 1px solid #c9ccd4;
    background: #dfe1e8;
    font-weight: normal;
    color: #55575e;
}

.datasheet th div {
    display: flex;
    align-items: center;
    padding-right: 8px;
}

.datasheet th span {
    flex: 1;
    line-height: 24px;
    white-space: nowrap;
}

.datasheet th button {
    width: 14px;
    line-height: 8px;
    text-align: right;
}

.datasheet th.no-line,
.datasheet th.select-all {
    border-right-color: #dfe1e8;
}

.select-all svg {
    margin-left: 12px;
}

.datasheet th.current {
    background: linear-gradient(#f9d766, #f8cf4a);
    color: #6b5a2c;
}

.datasheet th.clipped {
    padding-left: 6px;
    text-align: left;
}

.datasheet td {
    height: 27px;
    padding: 0 4px;
    border-right: 1px solid #ececec;
    white-space: nowrap;
}

.datasheet tbody tr:nth-child(odd) td {
    height: 28px;
}

.datasheet tbody tr:nth-child(even) td {
    background: #f0f0f1;
}

.datasheet tbody tr.active td {
    background: #b5d6fc;
    border-right-color: #c9e0fa;
    color: #16243c;
}

.datasheet tbody tr td.selector {
    padding: 0 0 0 6px;
    border-right: 1px solid #b5b8c4;
    border-bottom: 1px solid #bfc2ce;
    background: #dfe1ea;
}

.datasheet tbody tr.active td.selector {
    background: #fdd45a;
}

.datasheet tbody tr td.expand {
    padding: 0 0 0 3px;
    background: #fff;
}

.expand button {
    display: block;
    width: 13px;
    height: 13px;
    border: 1px solid #777;
    background:
        linear-gradient(#222, #222) center / 7px 1px no-repeat,
        linear-gradient(#222, #222) center / 1px 7px no-repeat,
        #fff;
}

.datasheet td.number {
    padding: 0 2px;
    text-align: right;
}

.datasheet tbody tr.active td.editing {
    background: #fff;
    box-shadow: inset 0 0 0 2px #ecc94e;
}

.editing mark {
    display: inline-block;
    height: 24px;
    line-height: 24px;
    background: #000;
    color: #fff;
}

.sheet-empty {
    flex: 1;
    background:
        repeating-linear-gradient(#f4f3fd 0, #f4f3fd 26px, #e6e4f3 26px, #e6e4f3 27px) 0 0 / 25px 100% no-repeat,
        repeating-linear-gradient(transparent 0, transparent 26px, #f7f7f7 26px, #f7f7f7 27px),
        repeating-linear-gradient(90deg, transparent 0, transparent 130px, #f7f7f7 130px, #f7f7f7 131px) 45px 0,
        #fff;
}

/* Mouse pointer with its highlight */
.pointer {
    position: absolute;
    left: 499px;
    top: 464px;
    width: 76px;
    height: 76px;
    padding: 25px 0 0 29px;
    border: 1px solid #ececc0;
    border-radius: 50%;
    background: #fdfcb9;
}
```
